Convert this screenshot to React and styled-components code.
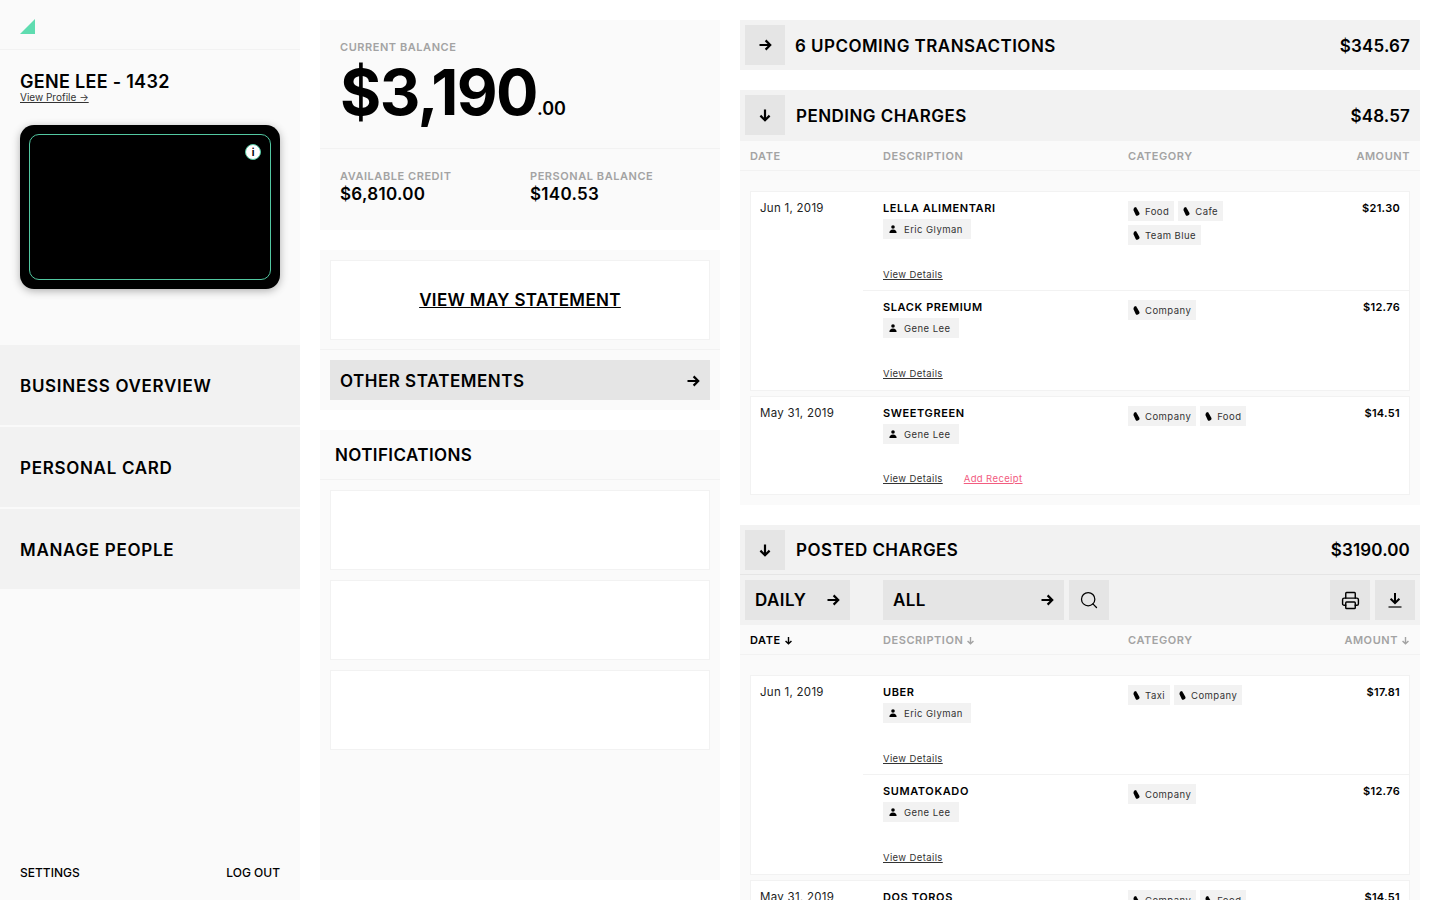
import React from "react";
import styled, { createGlobalStyle } from "styled-components";
import { Printer, Search } from "lucide-react";

const Global = createGlobalStyle`
  html, body { margin: 0; padding: 0; height: 100%; overflow: hidden; background: #fff; }
  body { font-family: "Inter", "Liberation Sans", sans-serif; color: #000; }
  * { box-sizing: border-box; }
`;

const Page = styled.div`
  display: flex; align-items: flex-start; height: 900px; overflow: hidden; background: #fff;
`;
const Sidebar = styled.aside`
  width: 300px; height: 900px; background: #fafafa; display: flex; flex-direction: column; flex: none;
`;
const LogoBar = styled.div`
  height: 50px; padding: 18px 20px 0; border-bottom: 1px solid #f2f2f2;
`;
const Profile = styled.div`
  padding: 22px 20px 0; height: 75px;
`;
const Name = styled.div`
  font-size: 18px; line-height: 20px; font-weight: 600; letter-spacing: 0.3px;
`;
const ProfileLink = styled.a`
  display: block; width: fit-content; font-size: 10px; line-height: 12px; color: #333;
  text-decoration: underline; margin-top: -1px;
`;
const CardWrap = styled.div`padding: 0 20px;`;
const Card = styled.div`
  height: 164px; background: #000; border-radius: 14px; padding: 9px; box-shadow: 0 2px 8px rgba(0,0,0,.3);
`;
const CardInner = styled.div`
  position: relative; height: 146px; border: 1px solid #52c7a0; border-radius: 10px;
`;
const InfoDot = styled.div`
  position: absolute; top: 9px; right: 9px; width: 16px; height: 16px; border-radius: 50%; background: #fff;
  border: 1px solid #52c7a0; display: flex; align-items: center; justify-content: center;
  font-size: 10px; font-weight: 700; line-height: 1;
`;
const Nav = styled.nav`
  margin-top: 56px; display: flex; flex-direction: column; gap: 2px;
`;
const NavItem = styled.div`
  height: 80px; background: #f2f2f2; display: flex; align-items: center; padding: 2px 20px 0;
  font-size: 17px; font-weight: 600; letter-spacing: 0.7px;
`;
const SideFoot = styled.div`
  margin-top: auto; padding: 0 20px 20px; display: flex; justify-content: space-between;
  font-size: 12px; line-height: 14px; font-weight: 500; letter-spacing: 0;
`;

const Middle = styled.section`
  width: 400px; margin: 20px 0 0 20px; flex: none; display: flex; flex-direction: column; gap: 20px;
`;
const Panel = styled.div`background: #fafafa; flex: none;`;
const BalanceTop = styled.div`
  height: 129px; border-bottom: 1px solid #f2f2f2; padding: 20px 20px 0;
`;
const Label = styled.div`
  font-size: 11px; line-height: 14px; font-weight: 600; color: #a3a3a3; letter-spacing: 0.55px;
`;
const BigAmount = styled.div`
  font-size: 63px; line-height: 64px; font-weight: 700; margin-top: 6px; letter-spacing: -1.6px;
`;
const Cents = styled.span`
  font-size: 18px; font-weight: 600; letter-spacing: 0;
`;
const BalanceBottom = styled.div`
  display: grid; grid-template-columns: 190px 1fr; padding: 20px 20px 0; height: 81px;
`;
const SmallAmount = styled.div`
  font-size: 17px; line-height: 22px; font-weight: 600; letter-spacing: 0.3px; margin-top: 0;
`;
const StatementBox = styled.div`
  padding: 10px 10px 9px; border-bottom: 1px solid #f2f2f2;
`;
const WhiteBox = styled.div`
  height: ${p => p.$h}px; background: #fff; border: 1px solid #f2f2f2;
  display: flex; align-items: center; justify-content: center;
`;
const StatementLink = styled.a`
  font-size: 17px; font-weight: 600; letter-spacing: 0.35px; text-decoration: underline;
`;
const StatementFoot = styled.div`padding: 10px;`;
const WideButton = styled.div`
  height: 40px; background: #e5e5e5; padding: 1px 10px 0; display: flex; align-items: center; justify-content: space-between;
  font-size: 17px; font-weight: 600; letter-spacing: 0.5px;
`;
const NotifPanel = styled(Panel)`height: 450px;`;
const NotifHead = styled.div`
  height: 50px; padding: 1px 15px 0; display: flex; align-items: center; border-bottom: 1px solid #f2f2f2;
  font-size: 17px; font-weight: 600; letter-spacing: 0.4px;
`;
const NotifList = styled.div`
  padding: 10px; display: flex; flex-direction: column; gap: 10px;
`;

const Right = styled.section`
  width: 680px; margin: 20px 0 0 20px; flex: none; display: flex; flex-direction: column; gap: 20px;
`;
const Head = styled.div`
  height: ${p => p.$h || 50}px; flex: none; background: #f2f2f2; padding: 0 10px 0 5px; display: flex; align-items: center;
  ${p => p.$h && "padding-bottom: 1px;"}
  ${p => p.$line && "border-bottom: 1px solid #e5e5e5;"}
`;
const SquareBtn = styled.div`
  width: 40px; height: 40px; background: #e5e5e5; display: flex; align-items: center; justify-content: center; flex: none;
`;
const HeadTitle = styled.div`
  margin-left: ${p => p.$ml}px; padding-top: 1px; font-size: 17px; font-weight: 600; letter-spacing: 0.46px; flex: 1;
`;
const HeadAmount = styled.div`
  padding-top: 1px; font-size: 17px; font-weight: 600; letter-spacing: 0.15px;
`;
const ColHead = styled.div`
  height: 30px; border-bottom: 1px solid #f2f2f2; display: grid; grid-template-columns: 133px 245px 1fr auto;
  align-items: center; padding: 1px 10px 0; font-size: 11px; font-weight: 600; letter-spacing: 0.55px; color: #a3a3a3;
`;
const ColLabel = styled.div`
  display: flex; align-items: center; gap: 3px; color: ${p => (p.$on ? "#000" : "#a3a3a3")};
`;
const Rows = styled.div`
  padding: 20px 10px 10px; display: flex; flex-direction: column; gap: 5px;
`;
const Group = styled.div`
  background: #fff; border: 1px solid #f2f2f2; display: flex;
`;
const DateCell = styled.div`
  width: 112px; flex: none; padding: 9px 0 0 9px; font-size: 11.5px; line-height: 15px; letter-spacing: 0.28px; color: #222;
`;
const GroupBody = styled.div`flex: 1; min-width: 0;`;
const Row = styled.div`
  height: ${p => p.$h}px; display: grid; grid-template-columns: 245px 1fr auto; padding: 9px 9px 0 20px;
  ${p => p.$line && "border-bottom: 1px solid #f2f2f2;"}
`;
const Desc = styled.div`display: flex; flex-direction: column; align-items: flex-start; position: relative; height: 100%;`;
const Merchant = styled.div`
  font-size: 11px; line-height: 15px; font-weight: 600; letter-spacing: 0.6px;
`;
const Pill = styled.div`
  height: 20px; background: #f2f2f2; display: inline-flex; align-items: center; gap: 5px; padding: 0 5px;
  font-size: 9.5px; letter-spacing: 0.45px; color: #333; flex: none;
`;
const PersonPill = styled(Pill)`margin-top: 3px; gap: 7px; padding: 0 8px 0 6px; letter-spacing: 0.45px;`;
const Links = styled.div`
  position: absolute; top: ${p => p.$top}px; left: 0; display: flex; gap: 21px; font-size: 9.5px; line-height: 12px; letter-spacing: 0.38px;
`;
const DetailLink = styled.a`
  color: ${p => (p.$alert ? "#f25c7f" : "#333")}; text-decoration: underline;
`;
const Cats = styled.div`
  display: flex; flex-wrap: wrap; gap: 4px; align-content: flex-start; max-width: 130px;
`;
const Amount = styled.div`
  font-size: 11px; line-height: 15px; font-weight: 600; letter-spacing: 0.3px; text-align: right;
`;
const Toolbar = styled.div`
  height: 50px; background: #f2f2f2; padding: 0 5px; display: flex; align-items: center;
`;
const Select = styled.div`
  width: ${p => p.$w}px; height: 40px; background: #e5e5e5; padding: 0 10px; margin-left: ${p => p.$ml || 0}px;
  display: flex; align-items: center; justify-content: space-between;
  font-size: 17px; font-weight: 600; letter-spacing: 0.4px;
`;
const Spacer = styled.div`flex: 1;`;
const IconBtn = styled(SquareBtn)`margin-left: 5px;`;

const Arrow = ({ dir = "right", size = 14, color = "#000", w = 2.2 }) => {
  const rot = { right: 0, down: 90 }[dir];
  return (
    <svg width={size} height={size} viewBox="0 0 14 14" fill="none" style={{ transform: `rotate(${rot}deg)` }}>
      <path d="M1.5 7h10.5M7.6 2.4 12.2 7l-4.6 4.6" stroke={color} strokeWidth={w} />
    </svg>
  );
};
const Download = () => (
  <svg width="14" height="16" viewBox="0 0 14 16" fill="none">
    <path d="M7 1v10M2.6 6.8 7 11l4.4-4.2" stroke="#000" strokeWidth="2" />
    <path d="M0.5 15h13" stroke="#000" strokeWidth="1.2" />
  </svg>
);
const Tag = () => (
  <svg width="7" height="9" viewBox="0 0 7 9"><path d="M1 .8 3 0l3.2 5.6c.5 1 .3 1.8-.4 2.3l-1 .7c-.8.5-1.6.3-2.1-.6L.4 3Z" fill="#000" /></svg>
);
const Person = () => (
  <svg width="8" height="8" viewBox="0 0 8 8"><circle cx="4" cy="2" r="1.8" fill="#000" /><path d="M0.4 8c0-2.2 1.4-3.4 3.6-3.4S7.6 5.8 7.6 8Z" fill="#000" /></svg>
);

const Transaction = ({ t, line, h, linkTop }) => (
  <Row $h={h} $line={line}>
    <Desc>
      <Merchant>{t.name}</Merchant>
      <PersonPill><Person />{t.person}</PersonPill>
      <Links $top={linkTop}>
        <DetailLink>View Details</DetailLink>
        {t.receipt && <DetailLink $alert>Add Receipt</DetailLink>}
      </Links>
    </Desc>
    <Cats>{t.cats.map(c => <Pill key={c}><Tag />{c}</Pill>)}</Cats>
    <Amount>{t.amount}</Amount>
  </Row>
);

const TxGroup = ({ date, items }) => (
  <Group>
    <DateCell>{date}</DateCell>
    <GroupBody>
      {items.map((t, i) => {
        const last = i === items.length - 1;
        const single = items.length === 1;
        return <Transaction key={t.name} t={t} line={!last} h={single ? 97 : 99} linkTop={single ? 67 : 68} />;
      })}
    </GroupBody>
  </Group>
);

const pending = [
  { date: "Jun 1, 2019", items: [
    { name: "LELLA ALIMENTARI", person: "Eric Glyman", cats: ["Food", "Cafe", "Team Blue"], amount: "$21.30" },
    { name: "SLACK PREMIUM", person: "Gene Lee", cats: ["Company"], amount: "$12.76" },
  ] },
  { date: "May 31, 2019", items: [
    { name: "SWEETGREEN", person: "Gene Lee", cats: ["Company", "Food"], amount: "$14.51", receipt: true },
  ] },
];
const posted = [
  { date: "Jun 1, 2019", items: [
    { name: "UBER", person: "Eric Glyman", cats: ["Taxi", "Company"], amount: "$17.81" },
    { name: "SUMATOKADO", person: "Gene Lee", cats: ["Company"], amount: "$12.76" },
  ] },
  { date: "May 31, 2019", items: [
    { name: "DOS TOROS", person: "Gene Lee", cats: ["Company", "Food"], amount: "$14.51" },
  ] },
];

export default function App() {
  return (
    <Page>
      <Global />
      <Sidebar>
        <LogoBar>
          <svg width="15" height="15" viewBox="0 0 15 15"><path d="M15 0v15H0Z" fill="#5fdcb0" /></svg>
        </LogoBar>
        <Profile>
          <Name>GENE LEE - 1432</Name>
          <ProfileLink>View Profile →</ProfileLink>
        </Profile>
        <CardWrap>
          <Card>
            <CardInner><InfoDot>i</InfoDot></CardInner>
          </Card>
        </CardWrap>
        <Nav>
          <NavItem>BUSINESS OVERVIEW</NavItem>
          <NavItem>PERSONAL CARD</NavItem>
          <NavItem>MANAGE PEOPLE</NavItem>
        </Nav>
        <SideFoot><span>SETTINGS</span><span>LOG OUT</span></SideFoot>
      </Sidebar>

      <Middle>
        <Panel>
          <BalanceTop>
            <Label>CURRENT BALANCE</Label>
            <BigAmount>$3,190<Cents>.00</Cents></BigAmount>
          </BalanceTop>
          <BalanceBottom>
            <div><Label>AVAILABLE CREDIT</Label><SmallAmount>$6,810.00</SmallAmount></div>
            <div><Label>PERSONAL BALANCE</Label><SmallAmount>$140.53</SmallAmount></div>
          </BalanceBottom>
        </Panel>
        <Panel>
          <StatementBox>
            <WhiteBox $h={80}><StatementLink>VIEW MAY STATEMENT</StatementLink></WhiteBox>
          </StatementBox>
          <StatementFoot>
            <WideButton>OTHER STATEMENTS<Arrow /></WideButton>
          </StatementFoot>
        </Panel>
        <NotifPanel>
          <NotifHead>NOTIFICATIONS</NotifHead>
          <NotifList>
            <WhiteBox $h={80} /><WhiteBox $h={80} /><WhiteBox $h={80} />
          </NotifList>
        </NotifPanel>
      </Middle>

      <Right>
        <Head>
          <SquareBtn><Arrow /></SquareBtn>
          <HeadTitle $ml={10}>6 UPCOMING TRANSACTIONS</HeadTitle>
          <HeadAmount>$345.67</HeadAmount>
        </Head>
        <Panel>
          <Head $h={51}>
            <SquareBtn><Arrow dir="down" /></SquareBtn>
            <HeadTitle $ml={11}>PENDING CHARGES</HeadTitle>
            <HeadAmount>$48.57</HeadAmount>
          </Head>
          <ColHead>
            <ColLabel>DATE</ColLabel><ColLabel>DESCRIPTION</ColLabel><ColLabel>CATEGORY</ColLabel><ColLabel>AMOUNT</ColLabel>
          </ColHead>
          <Rows>{pending.map(g => <TxGroup key={g.date} {...g} />)}</Rows>
        </Panel>
        <Panel>
          <Head $line>
            <SquareBtn><Arrow dir="down" /></SquareBtn>
            <HeadTitle $ml={11}>POSTED CHARGES</HeadTitle>
            <HeadAmount>$3190.00</HeadAmount>
          </Head>
          <Toolbar>
            <Select $w={105}>DAILY<Arrow /></Select>
            <Select $w={181} $ml={33}>ALL<Arrow /></Select>
            <IconBtn><Search size={20} strokeWidth={1.5} color="#000" /></IconBtn>
            <Spacer />
            <IconBtn><Printer size={19} strokeWidth={1.8} color="#000" /></IconBtn>
            <IconBtn><Download /></IconBtn>
          </Toolbar>
          <ColHead>
            <ColLabel $on>DATE <Arrow dir="down" size={9} /></ColLabel>
            <ColLabel>DESCRIPTION <Arrow dir="down" size={9} color="#a3a3a3" /></ColLabel>
            <ColLabel>CATEGORY</ColLabel>
            <ColLabel>AMOUNT <Arrow dir="down" size={9} color="#a3a3a3" /></ColLabel>
          </ColHead>
          <Rows>{posted.map(g => <TxGroup key={g.date} {...g} />)}</Rows>
        </Panel>
      </Right>
    </Page>
  );
}
